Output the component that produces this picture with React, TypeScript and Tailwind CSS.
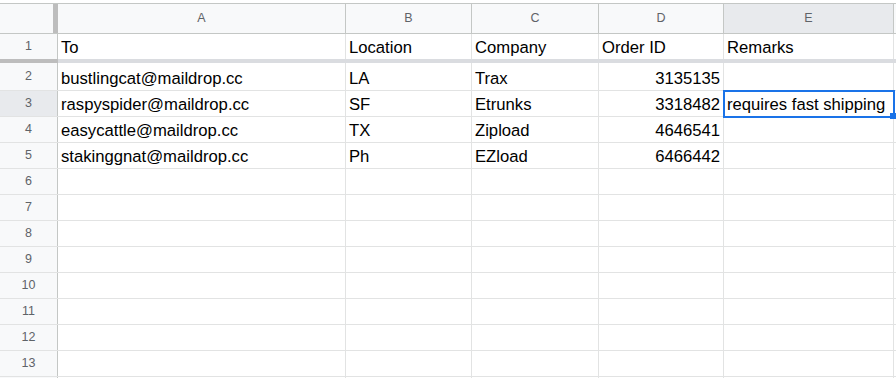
import React from "react";

const cols = ["A", "B", "C", "D", "E"];
const widths = ["w-[288px]", "w-[126px]", "w-[127px]", "w-[125px]", "w-[170px]"];

const data: string[][] = [
  ["To", "Location", "Company", "Order ID", "Remarks"],
  ["bustlingcat@maildrop.cc", "LA", "Trax", "3135135", ""],
  ["raspyspider@maildrop.cc", "SF", "Etrunks", "3318482", "requires fast shipping"],
  ["easycattle@maildrop.cc", "TX", "Zipload", "4646541", ""],
  ["stakinggnat@maildrop.cc", "Ph", "EZload", "6466442", ""],
];

const font = "font-['Liberation_Sans',Arial,sans-serif]";

function Cell({ text, col, row }: { text: string; col: number; row: number }) {
  const numeric = row > 0 && /^\d+$/.test(text);
  const selected = row === 2 && col === 4;
  return (
    <div
      className={`${widths[col]} shrink-0 border-r border-[#e2e3e3] flex items-end px-[3px] pb-[2px] ${
        numeric ? "justify-end" : "justify-start"
      } ${selected ? "relative" : ""}`}
    >
      <span className="text-[16.67px] leading-[19px] text-black whitespace-nowrap">{text}</span>
      {selected && (
        <>
          <div className="absolute -left-px -top-px -right-[2px] -bottom-[2px] border-2 border-[#1a73e8]" />
          <div className="absolute -right-[3px] -bottom-[3px] w-[6px] h-[6px] bg-[#1a73e8]" />
        </>
      )}
    </div>
  );
}

function RowHead({ n, active }: { n?: number; active?: boolean }) {
  return (
    <div
      className={`w-[58px] shrink-0 border-r border-[#c4c7c5] flex items-center justify-center text-[12.5px] text-[#5f6368] ${
        active ? "bg-[#e8eaed]" : "bg-[#f8f9fa]"
      }`}
    >
      {n}
    </div>
  );
}

export default function App() {
  const emptyRows = Array.from({ length: 8 }, (_, i) => i + 6);

  return (
    <div className={`w-[896px] h-[378px] overflow-hidden bg-white ${font}`}>
      <div className="h-[3px] bg-white" />

      {/* column headers */}
      <div className="flex h-[31px] border-y border-[#c4c7c5] bg-[#f8f9fa]">
        <div className="w-[58px] shrink-0 flex">
          <div className="w-[53px]" />
          <div className="w-[5px] bg-[#bdbdbd]" />
        </div>
        {cols.map((c, i) => (
          <div
            key={c}
            className={`${widths[i]} shrink-0 border-r border-[#c4c7c5] flex items-center justify-center text-[12.5px] text-[#5f6368] ${
              c === "E" ? "bg-[#e8eaed]" : ""
            }`}
          >
            {c}
          </div>
        ))}
        <div className="flex-1" />
      </div>

      {/* row 1 (frozen) */}
      <div className="flex h-[25px]">
        <RowHead n={1} />
        {data[0].map((t, i) => (
          <Cell key={i} text={t} col={i} row={0} />
        ))}
        <div className="flex-1" />
      </div>
      <div className="flex h-[4px]">
        <div className="w-[58px] shrink-0 bg-[#bdbdbd]" />
        <div className="flex-1 bg-[#dadce0]" />
      </div>

      {/* data rows */}
      {data.slice(1).map((r, ri) => (
        <div
          key={ri}
          className={`flex border-b border-[#e2e3e3] ${ri === 0 ? "h-[28px]" : "h-[26px]"}`}
        >
          <RowHead n={ri + 2} active={ri + 1 === 2} />
          {r.map((t, i) => (
            <Cell key={i} text={t} col={i} row={ri + 1} />
          ))}
          <div className="flex-1" />
        </div>
      ))}

      {emptyRows.map((n) => (
        <div key={n} className="flex h-[26px] border-b border-[#e2e3e3]">
          <RowHead n={n} />
          {cols.map((c, i) => (
            <Cell key={c} text="" col={i} row={n} />
          ))}
          <div className="flex-1" />
        </div>
      ))}

      <div className="flex h-[26px]">
        <RowHead />
        {cols.map((c, i) => (
          <Cell key={c} text="" col={i} row={14} />
        ))}
        <div className="flex-1" />
      </div>
    </div>
  );
}
